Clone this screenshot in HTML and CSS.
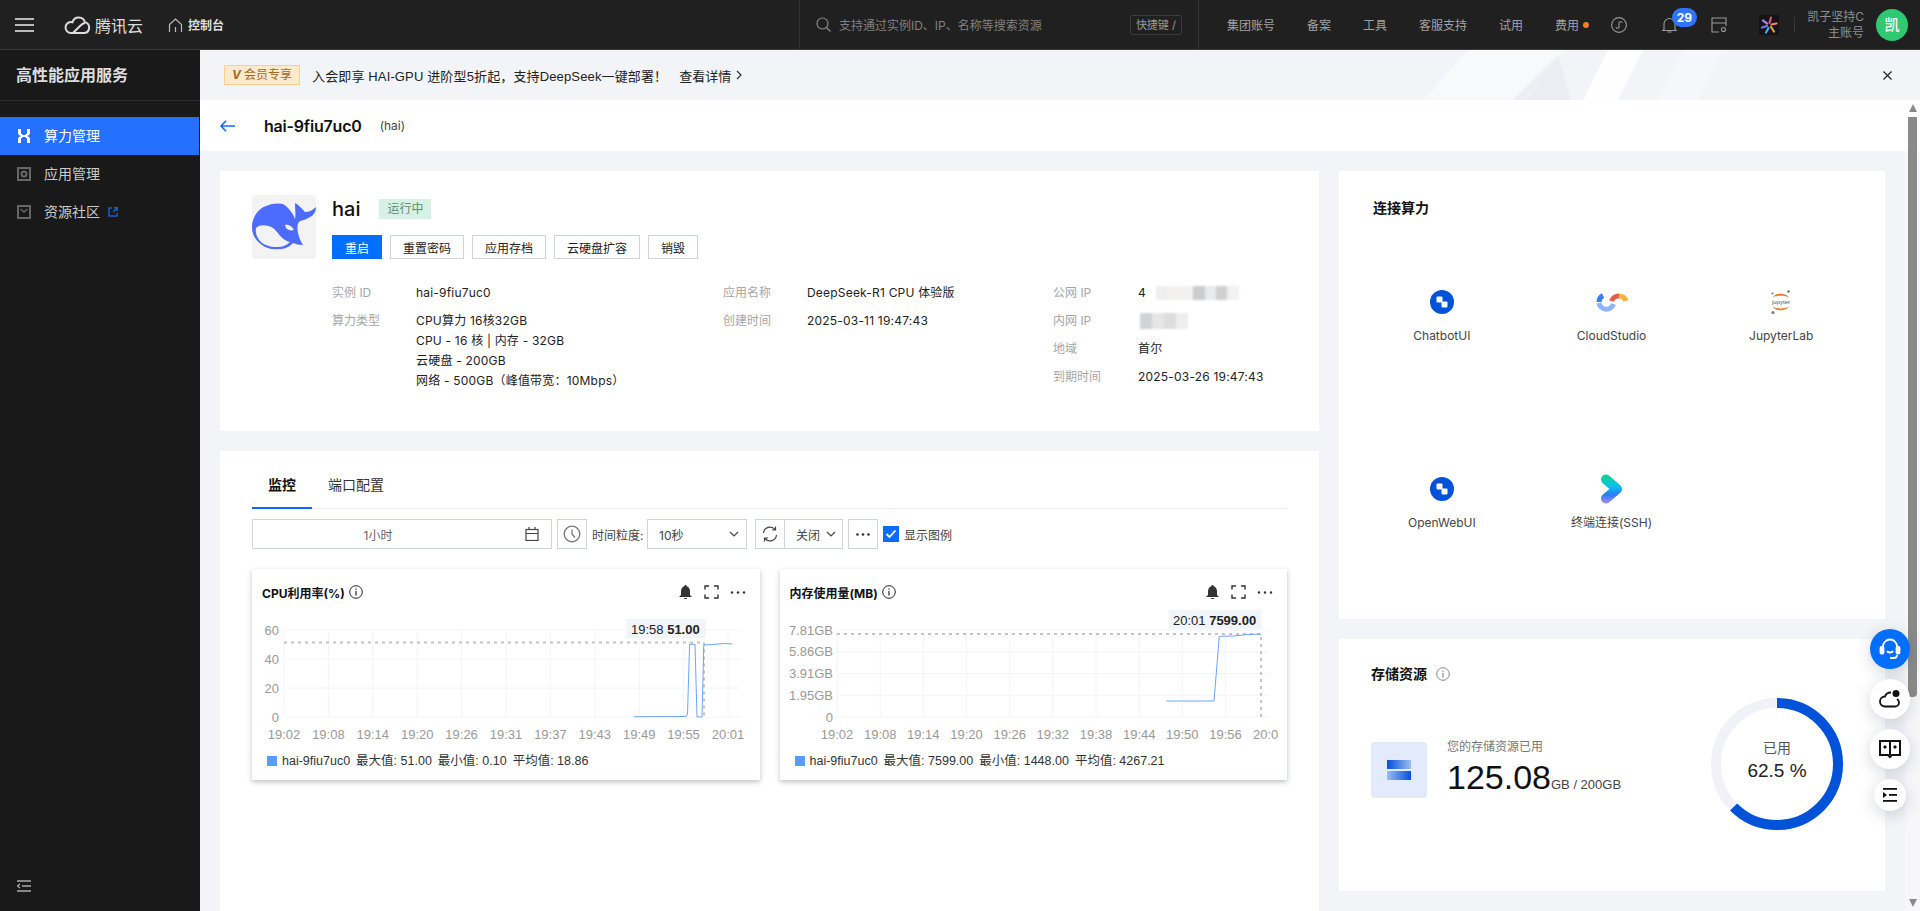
FILE: index.html
```html
<!DOCTYPE html>
<html lang="zh-CN">
<head>
<meta charset="utf-8">
<title>高性能应用服务</title>
<link rel="stylesheet" href="styles.css">
</head>
<body>
<div class="app">
  <header class="topbar">
    <svg class="burger" width="19" height="14" viewBox="0 0 19 14"><path d="M0 1h19M0 7h19M0 13h19" stroke="#bbb" stroke-width="2"/></svg>
    <div class="logo">
      <svg width="27" height="19" viewBox="0 0 27 19" fill="none" stroke="#ddd" stroke-width="2"><path d="M7 18a5.500 5.500 0 1 1 1.500-10.800A6.500 6.500 0 0 1 21 7.400 5.400 5.400 0 0 1 20.500 18Z"/><path d="M9 18l7-7c2-2 4-3 5-3"/></svg>
      <span>腾讯云</span>
    </div>
    <div class="console">
      <svg width="15" height="14" viewBox="0 0 15 14" fill="none" stroke="#bbb" stroke-width="1.200"><path d="M1.500 14V6.500L7.500 1l6 5.500V14M7.500 9v5"/></svg>
      <span>控制台</span>
    </div>
    <div class="search">
      <svg width="15" height="15" viewBox="0 0 15 15" fill="none" stroke="#888" stroke-width="1.200"><circle cx="6.500" cy="6.500" r="5.500"/><path d="M10.500 10.500l4 4"/></svg>
      <span class="search-text">支持通过实例ID、IP、名称等搜索资源</span>
      <span class="shortcut">快捷键 /</span>
    </div>
    <nav class="topnav">
      <a>集团账号</a><a>备案</a><a>工具</a><a>客服支持</a><a>试用</a><a>费用</a>
    </nav>
    <i class="hot-dot"></i>
    <svg class="ico-s" width="16" height="16" viewBox="0 0 16 16" fill="none" stroke="#999" stroke-width="1.100"><circle cx="8" cy="8" r="7.400"/><path d="M4.800 10.300a1.800 1.800 0 0 0 3.200 0V5.700a1.800 1.800 0 0 1 3.200 0"/></svg>
    <div class="bell">
      <svg width="15" height="16" viewBox="0 0 15 16" fill="none" stroke="#999" stroke-width="1.100"><path d="M2 12.500V7a5.500 5.500 0 0 1 11 0v5.500l1.200 1H.8ZM5.500 15h4"/></svg>
      <b class="badge">29</b>
    </div>
    <svg class="ico-c" width="16" height="16" viewBox="0 0 16 16" fill="none" stroke="#999" stroke-width="1.100"><path d="M8 15H1V1h14v8M1 6h14"/><circle cx="12.500" cy="12.500" r="2"/></svg>
    <svg class="ico-k" width="20" height="20" viewBox="0 0 20 20" fill="none" stroke-width="2.200" stroke-linecap="round"><rect width="20" height="20" fill="#141414"/><path d="M10.500 8l1.500-5.500" stroke="#e0508a"/><path d="M12.500 9.500l5-1" stroke="#f08a70"/><path d="M12 12l3 4.500" stroke="#f2a12c"/><path d="M9.500 13l-2.500 4.500" stroke="#4aa4f0"/><path d="M8 11l-5 1.500" stroke="#6a7cf0"/><path d="M8 8.500l-4-3" stroke="#a77cf0"/></svg>
    <i class="t-div"></i>
    <div class="who"><span>凯子坚持C</span><span>主账号</span></div>
    <div class="avatar">凯</div>
  </header>

  <div class="body">
    <aside class="sidebar">
      <h1 class="side-title">高性能应用服务</h1>
      <ul class="menu">
        <li class="menu-item active">
          <svg width="14" height="14" viewBox="0 0 14 14" fill="#fff"><path d="M1 0h3v4.500L6 6h2l2-1.500V0h3v5l-2.500 2L13 9v5h-3V9.500L8 8H6L4 9.500V14H1V9l2.500-2L1 5Z"/></svg>
          <span>算力管理</span>
        </li>
        <li class="menu-item">
          <svg width="14" height="14" viewBox="0 0 14 14" fill="none" stroke="#666"><rect x="1" y="1" width="12" height="12" stroke-width="2"/><circle cx="7" cy="7" r="2.500" stroke-width="2"/></svg>
          <span>应用管理</span>
        </li>
        <li class="menu-item">
          <svg width="14" height="14" viewBox="0 0 14 14" fill="none" stroke="#666" stroke-width="2"><rect x="1" y="1" width="12" height="12"/><path d="M3.500 4l3.500 3 3.500-3" stroke-width="1.500"/></svg>
          <span>资源社区</span>
          <svg class="ext" width="10" height="10" viewBox="0 0 10 10" fill="none" stroke="#1f5fc4" stroke-width="1.500"><path d="M4 1H1v8h8V6M5 5l4-4M6 .8h3.200V4"/></svg>
        </li>
      </ul>
      <svg class="side-foot" width="14" height="12" viewBox="0 0 14 12" fill="none" stroke="#aaa" stroke-width="1.300"><path d="M0 1h14M5 6h9M0 11h14M3 4L.5 6 3 8"/></svg>
    </aside>

    <main class="main">
      <section class="banner">
        <svg class="banner-art" width="400" height="50" viewBox="0 0 400 50"><polygon points="75,0 170,0 135,50 30,50" fill="#fff" opacity=".45"/><polygon points="215,0 250,0 225,50 190,50" fill="#fff" opacity=".9"/><polygon points="290,0 330,0 305,50 265,50" fill="#fff" opacity=".25"/><polygon points="165,5 178,50 120,50 140,30" fill="#e6e8ed" opacity=".55"/></svg>
        <span class="vip"><em>V</em>会员专享</span>
        <span class="banner-text">入会即享 HAI-GPU 进阶型5折起，支持DeepSeek一键部署！</span>
        <a class="banner-link">查看详情</a>
        <svg class="banner-chev" width="6" height="10" viewBox="0 0 6 10" fill="none" stroke="#333" stroke-width="1.200"><path d="M1 1l4 4-4 4"/></svg>
        <svg class="banner-close" width="9" height="9" viewBox="0 0 9 9" stroke="#222" stroke-width="1.200"><path d="M.5.500l8 8M8.500.500l-8 8"/></svg>
      </section>

      <div class="scroll">
        <div class="page-head">
          <svg width="15" height="12" viewBox="0 0 15 12" fill="none" stroke="#0a6cff" stroke-width="1.600"><path d="M15 6H1M6 .8L1 6l5 5.200"/></svg>
          <span class="page-title">hai-9fiu7uc0</span>
          <span class="page-sub">(hai)</span>
        </div>

        <div class="columns">
          <div class="col-left">
            <section class="card app-card">
              <div class="whale">
                <svg width="64" height="64" viewBox="0 0 64 64"><path fill="#4d6bfe" d="M0 32C0 22 6 14 14 11C20 8 27 8 31 9C36 12 41 18 43 24C44 20 43 14 43 8C47 10 50 14 53 17C57 17 61 15 64 12C64 16 62 20 58 22C55 24 52 25 48 26C45 28 45 33 46 38C47 43 49 47 51 50C47 50 44 49 41 48C37 52 33 54 27 54C20 55 14 53 10 50C4 46 0 40 0 32Z"/><path fill="#f3f3f3" d="M4 33C8 29 16 30 21 33C25 36 28 42 33 45C35 46 37 47 38 47C34 51 30 52 25 52C18 52 12 50 8 46C5 42 3 38 4 33Z"/><path fill="#f3f3f3" d="M33 30C36 29 40 31 42 35C39 36 36 35 34 33Z"/></svg>
              </div>
              <div class="app-main">
                <div class="app-head"><span class="app-name">hai</span><span class="tag">运行中</span></div>
                <div class="btns">
                  <button class="btn primary">重启</button>
                  <button class="btn">重置密码</button>
                  <button class="btn">应用存档</button>
                  <button class="btn">云硬盘扩容</button>
                  <button class="btn">销毁</button>
                </div>
                <div class="info">
                  <dl class="info-col c1">
                    <dt>实例 ID</dt><dd>hai-9fiu7uc0</dd>
                    <dt>算力类型</dt><dd>CPU算力 16核32GB<br>CPU - 16 核 | 内存 - 32GB<br>云硬盘 - 200GB<br>网络 - 500GB（峰值带宽：10Mbps）</dd>
                  </dl>
                  <dl class="info-col c2">
                    <dt>应用名称</dt><dd>DeepSeek-R1 CPU 体验版</dd>
                    <dt>创建时间</dt><dd>2025-03-11 19:47:43</dd>
                  </dl>
                  <dl class="info-col c3">
                    <dt>公网 IP</dt><dd class="masked">4<i class="mask mask-a"></i></dd>
                    <dt>内网 IP</dt><dd class="masked"><i class="mask mask-b"></i></dd>
                    <dt>地域</dt><dd>首尔</dd>
                    <dt>到期时间</dt><dd>2025-03-26 19:47:43</dd>
                  </dl>
                </div>
              </div>
            </section>

            <section class="card monitor">
              <div class="tabs"><a class="tab on">监控</a><a class="tab">端口配置</a></div>
              <div class="toolbar">
                <div class="ctl date"><span>1小时</span>
                  <svg width="14" height="14" viewBox="0 0 14 14" fill="none" stroke="#444" stroke-width="1.200"><rect x="1" y="2.500" width="12" height="11"/><path d="M4 0v3M10 0v3M1 6.500h12"/></svg>
                </div>
                <div class="ctl sq clock"><svg width="18" height="18" viewBox="0 0 18 18" fill="none" stroke="#777" stroke-width="1.300"><circle cx="9" cy="9" r="7.800"/><path d="M9 4.500V9l3 3.500"/></svg></div>
                <span class="lbl">时间粒度:</span>
                <div class="ctl select"><span>10秒</span><svg width="10" height="6" viewBox="0 0 10 6" fill="none" stroke="#444" stroke-width="1.200"><path d="M1 1l4 4 4-4"/></svg></div>
                <div class="ctl sq refresh"><svg width="16" height="16" viewBox="0 0 16 16" fill="none" stroke="#444" stroke-width="1.200"><path d="M1.500 7A6.500 6.500 0 0 1 13 3.500M14.500 9A6.500 6.500 0 0 1 3 12.500M13.500.500v3.500H10M2.500 15.500V12H6"/></svg></div>
                <div class="ctl off"><span>关闭</span><svg width="10" height="6" viewBox="0 0 10 6" fill="none" stroke="#444" stroke-width="1.200"><path d="M1 1l4 4 4-4"/></svg></div>
                <div class="ctl sq more"><svg width="14" height="3" viewBox="0 0 14 3" fill="#333"><circle cx="1.500" cy="1.500" r="1.300"/><circle cx="7" cy="1.500" r="1.300"/><circle cx="12.500" cy="1.500" r="1.300"/></svg></div>
                <span class="check"><svg width="16" height="16" viewBox="0 0 16 16"><rect width="16" height="16" fill="#0a6cff"/><path d="M3.500 8l3 3 6-6.500" fill="none" stroke="#fff" stroke-width="1.800"/></svg></span>
                <span class="check-lbl">显示图例</span>
              </div>

              <div class="charts">
                <article class="chart">
                  <div class="chart-head">
                    <span class="chart-title">CPU利用率(%)</span>
                    <svg class="info-i" width="14" height="14" viewBox="0 0 14 14" fill="none" stroke="#222"><circle cx="7" cy="7" r="6.300"/><path d="M7 6v4.500M7 3.500v1.300" stroke-width="1.200"/></svg>
                    <span class="grow"></span>
                    <svg class="h-bell" width="13" height="14" viewBox="0 0 13 14" fill="#333"><path d="M6.500 0C7.300 0 7.700.600 7.700 1.300 10 2 11 4 11 6.500V10l2 2H0l2-2V6.500C2 4 3 2 5.300 1.300 5.300.600 5.700 0 6.500 0ZM4.800 13h3.400c0 .6-.8 1-1.700 1s-1.700-.4-1.700-1Z"/></svg>
                    <svg class="h-full" width="15" height="14" viewBox="0 0 15 14" fill="none" stroke="#333" stroke-width="1.400"><path d="M5 1H1v3.500M10 1h4v3.500M5 13H1V9.500M10 13h4V9.500"/></svg>
                    <svg class="h-more" width="16" height="3" viewBox="0 0 16 3" fill="#333"><circle cx="2" cy="1.500" r="1.200"/><circle cx="8" cy="1.500" r="1.200"/><circle cx="14" cy="1.500" r="1.200"/></svg>
                  </div>
                  <svg class="plot" width="508" height="135" viewBox="252 610 508 135">
                    <path class="grid" d="M284 630H741M284 659H741M284 688H741M284 717H741M284 630V717M328.400 630V717M372.800 630V717M417.200 630V717M461.600 630V717M506 630V717M550.400 630V717M594.800 630V717M639.200 630V717M683.600 630V717M728 630V717"/>
                    <g class="ylab"><text x="279" y="635">60</text><text x="279" y="664">40</text><text x="279" y="693">20</text><text x="279" y="722">0</text></g>
                    <g class="xlab"><text x="284" y="739">19:02</text><text x="328.400" y="739">19:08</text><text x="372.800" y="739">19:14</text><text x="417.200" y="739">19:20</text><text x="461.600" y="739">19:26</text><text x="506" y="739">19:31</text><text x="550.400" y="739">19:37</text><text x="594.800" y="739">19:43</text><text x="639.200" y="739">19:49</text><text x="683.600" y="739">19:55</text><text x="728" y="739">20:01</text></g>
                    <path class="dash" d="M284 642.500H704V717"/>
                    <polyline class="line" points="634,716.700 686,716.500 687.500,714 689.600,644.300 695,644.300 697,717 702,717 703.800,645 712,644.500 725,643.500 732.400,644"/>
                    <rect class="tip" x="626.500" y="619" width="79" height="19"/>
                    <text class="tip-t" x="631" y="634">19:58 <tspan font-weight="700">51.00</tspan></text>
                  </svg>
                  <div class="legend"><i></i><span>hai-9fiu7uc0</span><span>最大值: 51.00</span><span>最小值: 0.10</span><span>平均值: 18.86</span></div>
                </article>

                <article class="chart">
                  <div class="chart-head">
                    <span class="chart-title">内存使用量(MB)</span>
                    <svg class="info-i" width="14" height="14" viewBox="0 0 14 14" fill="none" stroke="#222"><circle cx="7" cy="7" r="6.300"/><path d="M7 6v4.500M7 3.500v1.300" stroke-width="1.200"/></svg>
                    <span class="grow"></span>
                    <svg class="h-bell" width="13" height="14" viewBox="0 0 13 14" fill="#333"><path d="M6.500 0C7.300 0 7.700.600 7.700 1.300 10 2 11 4 11 6.500V10l2 2H0l2-2V6.500C2 4 3 2 5.300 1.300 5.300.600 5.700 0 6.500 0ZM4.800 13h3.400c0 .6-.8 1-1.700 1s-1.700-.4-1.700-1Z"/></svg>
                    <svg class="h-full" width="15" height="14" viewBox="0 0 15 14" fill="none" stroke="#333" stroke-width="1.400"><path d="M5 1H1v3.500M10 1h4v3.500M5 13H1V9.500M10 13h4V9.500"/></svg>
                    <svg class="h-more" width="16" height="3" viewBox="0 0 16 3" fill="#333"><circle cx="2" cy="1.500" r="1.200"/><circle cx="8" cy="1.500" r="1.200"/><circle cx="14" cy="1.500" r="1.200"/></svg>
                  </div>
                  <svg class="plot" width="508" height="135" viewBox="780 610 508 135">
                    <path class="grid" d="M837 630H1269M837 651.800H1269M837 673.500H1269M837 695.200H1269M837 717H1269M837 630V717M880.200 630V717M923.300 630V717M966.500 630V717M1009.700 630V717M1052.800 630V717M1096 630V717M1139.200 630V717M1182.300 630V717M1225.500 630V717"/>
                    <g class="ylab"><text x="833" y="635">7.81GB</text><text x="833" y="656">5.86GB</text><text x="833" y="678">3.91GB</text><text x="833" y="700">1.95GB</text><text x="833" y="722">0</text></g>
                    <g class="xlab"><text x="837" y="739">19:02</text><text x="880.200" y="739">19:08</text><text x="923.300" y="739">19:14</text><text x="966.500" y="739">19:20</text><text x="1009.700" y="739">19:26</text><text x="1052.800" y="739">19:32</text><text x="1096" y="739">19:38</text><text x="1139.200" y="739">19:44</text><text x="1182.300" y="739">19:50</text><text x="1225.500" y="739">19:56</text></g>
                    <text class="xlab-end" x="1253" y="739">20:0</text>
                    <path class="dash" d="M837 634H1261V717"/>
                    <polyline class="line" points="1166.500,701 1214,701 1219.300,636.300 1233.800,636 1246,634.700 1259.700,634 1261,635"/>
                    <rect class="tip" x="1168.500" y="610" width="93" height="19"/>
                    <text class="tip-t" x="1173" y="625">20:01 <tspan font-weight="700">7599.00</tspan></text>
                  </svg>
                  <div class="legend"><i></i><span>hai-9fiu7uc0</span><span>最大值: 7599.00</span><span>最小值: 1448.00</span><span>平均值: 4267.21</span></div>
                </article>
              </div>
            </section>
          </div>

          <div class="col-right">
            <section class="card connect">
              <h2 class="card-title">连接算力</h2>
              <div class="tiles">
                <div class="tile">
                  <svg width="24" height="24" viewBox="0 0 24 24"><circle cx="12" cy="12" r="12" fill="#0052d9"/><rect x="6.500" y="6.500" width="6" height="6" rx="1" fill="#fff"/><rect x="11.500" y="11.500" width="6" height="6" rx="1" fill="#fff"/></svg>
                  <span>ChatbotUI</span>
                </div>
                <div class="tile">
                  <svg width="32" height="24" viewBox="0 0 32 24" fill="none" stroke-width="5"><path d="M7 5.500A7.500 7.500 0 0 0 3 12" stroke="#3f7bf2"/><path d="M3 13a7.500 7.500 0 0 0 14.500 1" stroke="#8fb4fb"/><path d="M15.500 11A7.500 7.500 0 0 1 23 6" stroke="#ec5a45"/><path d="M23 6a7.500 7.500 0 0 1 7 5" stroke="#f3b33c"/></svg>
                  <span>CloudStudio</span>
                </div>
                <div class="tile">
                  <svg width="24" height="24" viewBox="0 0 24 24" fill="none"><path d="M3.500 7.500C6 2.500 17 2.500 20 7.500C17 5 6 5 3.500 7.500Z" fill="#f37726"/><path d="M3.500 16.500C6 21.500 17 21.500 20 16.500C17 19 6 19 3.500 16.500Z" fill="#f37726"/><text class="jup" x="12" y="13.500">jupyter</text><circle cx="19.500" cy="1.500" r="1.300" fill="#767677"/><circle cx="3.500" cy="3.500" r="1" fill="#767677"/><circle cx="4" cy="22.500" r="1.500" fill="#767677"/></svg>
                  <span>JupyterLab</span>
                </div>
                <div class="tile">
                  <svg width="24" height="24" viewBox="0 0 24 24"><circle cx="12" cy="12" r="12" fill="#0052d9"/><rect x="6.500" y="6.500" width="6" height="6" rx="1" fill="#fff"/><rect x="11.500" y="11.500" width="6" height="6" rx="1" fill="#fff"/></svg>
                  <span>OpenWebUI</span>
                </div>
                <div class="tile">
                  <svg class="ssh" width="24" height="30" viewBox="0 0 24 30" fill="none"><defs><linearGradient id="sshg" gradientUnits="userSpaceOnUse" x1="0" y1="0" x2="0" y2="30"><stop offset="0" stop-color="#12d67d"/><stop offset=".4" stop-color="#0cc0ee"/><stop offset=".7" stop-color="#2a7cf7"/><stop offset="1" stop-color="#bb8cf5"/></linearGradient></defs><path d="M6 5.500L17 15 6 24.500" stroke="url(#sshg)" stroke-width="10" stroke-linecap="round" stroke-linejoin="round"/></svg>
                  <span>终端连接(SSH)</span>
                </div>
              </div>
            </section>

            <section class="card storage">
              <div class="st-head">
                <h2 class="card-title">存储资源</h2>
                <svg width="14" height="14" viewBox="0 0 14 14" fill="none" stroke="#888"><circle cx="7" cy="7" r="6.300"/><path d="M7 6v4.500M7 3.500v1.300" stroke-width="1.200"/></svg>
              </div>
              <div class="st-body">
                <div class="st-icon"><i class="bar a"></i><i class="bar b"></i></div>
                <div class="st-text">
                  <div class="st-cap">您的存储资源已用</div>
                  <div class="st-num"><strong>125.08</strong><span>GB / 200GB</span></div>
                </div>
                <div class="donut">
                  <svg width="132" height="132" viewBox="0 0 132 132" fill="none" stroke-width="10"><circle cx="66" cy="66" r="61" stroke="#f0f2f7"/><circle cx="66" cy="66" r="61" stroke="#0052d9" stroke-dasharray="239.500 383.300" transform="rotate(-90 66 66)"/></svg>
                  <div class="donut-t"><span>已用</span><b>62.5 %</b></div>
                </div>
              </div>
            </section>
          </div>
        </div>

        <div class="sbar">
          <i class="arr up"></i>
          <i class="thumb"></i>
          <i class="arr down"></i>
        </div>
      </div>
    </main>
  </div>

  <div class="fab">
    <a class="fab-b blue"><svg width="22" height="22" viewBox="0 0 22 22" fill="none" stroke="#fff" stroke-width="1.800"><path d="M4 10V8.500a7 7 0 0 1 14 0V10"/><rect x="1.500" y="9" width="3" height="6.500" rx="1" fill="#fff"/><rect x="17.500" y="9" width="3" height="6.500" rx="1" fill="#fff"/><path d="M8 13c1 2 5 2 6 0M11 20h4c2 0 3-1 3-3"/></svg></a>
    <a class="fab-b"><svg width="22" height="20" viewBox="0 0 22 20" fill="none" stroke="#111" stroke-width="1.800"><path d="M12 3.500A6 6 0 0 0 6 7.500a5 5 0 0 0 0 10h10a4 4 0 0 0 4-4 4 4 0 0 0-2-3.500"/><circle cx="17" cy="4.500" r="3.500" fill="#111" stroke="none"/></svg></a>
    <a class="fab-b"><svg width="22" height="20" viewBox="0 0 22 20" fill="none" stroke="#111" stroke-width="2"><path d="M1 2h20v14H13l-2 2-2-2H1ZM11 2v14"/><path d="M5 7h2v2H5ZM15 7h2v2h-2Z" fill="#111" stroke-width="1"/></svg></a>
    <a class="fab-b small"><svg width="14" height="14" viewBox="0 0 14 14" fill="#111"><rect width="14" height="1.800"/><rect x="6" y="6" width="8" height="1.800"/><rect y="12" width="14" height="1.800"/><path d="M0 4l4 3-4 3Z"/></svg></a>
  </div>
</div>
</body>
</html>
```

FILE: styles.css
```css
* { box-sizing: border-box; }
html, body { margin: 0; height: 100%; overflow: hidden; }
body { font-family: Inter, "Noto Sans CJK SC", sans-serif; font-size: 12px; color: #222; background: #f2f4f8; }
ul, dl, dd, h1, h2 { margin: 0; padding: 0; }
i { font-style: normal; }
svg { display: block; flex: none; }

.app { position: relative; height: 100vh; display: flex; flex-direction: column; }

/* top bar */
.topbar { height: 50px; flex: none; display: flex; align-items: center; background: #202020; border-bottom: 1px solid #3a3a3a; color: #a3a3a3; }
.burger { margin-left: 15px; }
.logo { display: flex; align-items: center; gap: 4px; margin-left: 30px; color: #ddd; font-size: 16px; }
.console { display: flex; align-items: center; gap: 5px; margin-left: 25px; color: #ddd; font-weight: 700; }
.search { margin-left: auto; width: 400px; height: 49px; display: flex; align-items: center; padding: 0 16px; border-left: 1px solid #333; border-right: 1px solid #333; color: #808080; }
.search-text { margin-left: 8px; flex: 1; }
.shortcut { width: 52px; height: 20px; line-height: 18px; text-align: center; border: 1px solid #3a3a3a; border-radius: 2px; font-size: 11px; color: #999; }
.topnav { display: flex; gap: 32px; margin-left: 28px; }
.hot-dot { width: 6px; height: 6px; margin-left: 4px; border-radius: 50%; background: #f07f2e; }
.ico-s { margin-left: 22px; }
.bell { position: relative; margin-left: 35px; width: 15px; }
.badge { position: absolute; left: 10px; top: -9px; width: 25px; height: 19px; line-height: 19px; text-align: center; border-radius: 10px; background: #2d74ff; color: #fff; font-size: 12px; }
.ico-c { margin-left: 34px; }
.ico-k { margin-left: 32px; }
.t-div { width: 1px; height: 16px; margin-left: 15px; background: #3a3a3a; }
.who { margin-left: 11px; width: 58px; display: flex; flex-direction: column; align-items: flex-end; line-height: 16px; color: #8f8f8f; }
.avatar { width: 32px; height: 32px; margin: 0 12px; border-radius: 50%; background: #2ec971; color: #fff; font-size: 15px; line-height: 32px; text-align: center; font-weight: 500; }

/* frame */
.body { flex: 1; min-height: 0; display: flex; }
.sidebar { width: 200px; flex: none; display: flex; flex-direction: column; background: #191919; }
.side-title { height: 51px; line-height: 50px; padding-left: 16px; font-size: 16px; font-weight: 700; color: #ddd; border-bottom: 1px solid #2e2e2e; }
.menu { list-style: none; padding-top: 16px; }
.menu-item { height: 38px; display: flex; align-items: center; gap: 13px; padding-left: 17px; font-size: 14px; color: #ccc; }
.menu-item span { margin-top: -2px; }
.menu-item.active { background: #2470ff; color: #fff; margin-right: 1px; }
.menu-item .ext { margin-left: -5px; }
.side-foot { margin: auto 0 19px 17px; }

.main { flex: 1; min-width: 0; display: flex; flex-direction: column; }
.banner { position: relative; height: 50px; flex: none; display: flex; align-items: center; padding-left: 24px; background: #f2f4f8; font-size: 13px; }
.banner-art { position: absolute; left: 1193px; top: 0; }
.vip { position: relative; width: 76px; height: 20px; line-height: 18px; text-align: center; background: #fdeacb; border: 1px solid #fbcf8e; color: #a5682c; font-size: 12px; }
.vip em { margin-right: 3px; font-weight: 700; color: #a5682c; }
.banner-text { position: relative; margin-left: 12px; color: #222; font-family: "Liberation Sans", "Noto Sans CJK SC", sans-serif; letter-spacing: .14px; }
.banner-link { position: relative; margin-left: 12px; color: #222; }
.banner-chev { position: relative; margin-left: 5px; }
.banner-close { position: absolute; right: 28px; top: 21px; }

.scroll { position: relative; flex: 1; min-height: 0; overflow: hidden; }
.page-head { height: 51px; display: flex; align-items: center; padding-left: 20px; background: #fff; }
.page-title { margin-left: 29px; font-size: 16px; font-weight: 600; color: #111; letter-spacing: -.2px; }
.page-sub { margin-left: 18px; color: #444; }

.columns { display: flex; gap: 20px; padding: 20px 0 0 20px; }
.col-left { width: 1099px; flex: none; display: flex; flex-direction: column; gap: 20px; }
.col-right { width: 546px; flex: none; display: flex; flex-direction: column; gap: 20px; }
.card { background: #fff; }

/* app card */
.app-card { height: 260px; display: flex; padding: 24px 32px; }
.whale { width: 64px; height: 64px; flex: none; border-radius: 4px; background: #f3f3f3; }
.app-main { margin-left: 16px; flex: 1; }
.app-head { height: 28px; display: flex; align-items: center; gap: 19px; }
.app-name { font-size: 20px; font-weight: 500; color: #111; }
.tag { width: 52px; height: 20px; line-height: 20px; text-align: center; background: #d5f2e4; color: #5f8a75; }
.btns { display: flex; gap: 8px; margin-top: 12px; }
.btn { height: 24px; padding: 0 12px; border: 1px solid #cfd5de; background: #fff; font: inherit; color: #222; }
.btn.primary { background: #006eff; border-color: #006eff; color: #fff; }
.info { display: flex; margin-top: 24px; }
.info-col { display: grid; align-content: start; row-gap: 8px; line-height: 20px; }
.info-col dt { color: #a6a6a6; }
.info-col dd { color: #222; letter-spacing: .2px; }
.c1 { width: 391px; grid-template-columns: 84px 1fr; }
.c2 { width: 330px; grid-template-columns: 84px 1fr; }
.c3 { flex: 1; grid-template-columns: 85px 1fr; }
.masked { display: flex; align-items: center; height: 20px; }
.mask { display: block; filter: blur(1px); }
.mask-a { width: 92px; height: 14px; margin-left: 1px; background: linear-gradient(90deg, #fff 0 10%, #eee 10% 22%, #f3f1ee 22% 50%, #ccc 50% 63%, #e8eaee 63% 75%, #d0d0d0 75% 87%, #f0f1f3 87%); }
.mask-b { width: 48px; height: 16px; margin-left: 2px; background: linear-gradient(90deg, #d0d2d5 0 25%, #e6e6e6 25% 50%, #ddd 50% 75%, #eee 75%); }

/* monitor */
.monitor { padding: 0 32px; min-height: 480px; }
.tabs { height: 58px; display: flex; border-bottom: 1px solid #e7eaef; }
.tab { height: 58px; padding: 24px 16px 0; line-height: 20px; font-size: 14px; color: #333; border-bottom: 2px solid transparent; }
.tab.on { font-weight: 700; color: #111; border-bottom-color: #0a6cff; width: 60px; }
.toolbar { display: flex; align-items: center; height: 30px; margin-top: 10px; }
.ctl { height: 30px; display: flex; align-items: center; border: 1px solid #cfd5de; background: #fff; color: #444; }
.date { width: 300px; padding: 0 12px 0 0; }
.date span { flex: 1; text-align: center; padding-right: 22px; color: #666; }
.sq { width: 30px; justify-content: center; }
.clock { margin-left: 5px; }
.lbl { margin-left: 5px; width: 55px; color: #444; }
.select { width: 100px; padding: 0 7px 0 11px; justify-content: space-between; }
.refresh { margin-left: 8px; }
.off { width: 59px; margin-left: -1px; padding: 0 6px 0 11px; justify-content: space-between; }
.more { margin-left: 5px; }
.check { margin-left: 5px; }
.check-lbl { margin-left: 5px; color: #444; }

.charts { display: grid; grid-template-columns: 1fr 1fr; gap: 20px; margin-top: 20px; }
.chart { height: 211px; background: #fff; box-shadow: 0 2px 5px rgba(54, 58, 80, .32); overflow: hidden; }
.chart-head { height: 41px; display: flex; align-items: center; padding: 5px 14px 0 10px; }
.chart-title { font-weight: 700; color: #111; }
.info-i { margin-left: 4px; }
.grow { flex: 1; }
.h-full { margin-left: 12px; }
.h-more { margin-left: 11px; }
.plot text { font-family: "Liberation Sans", sans-serif; font-size: 13px; }
.grid { fill: none; stroke: #f3f4f6; stroke-width: 1; }
.ylab text { fill: #999; text-anchor: end; }
.xlab text { fill: #999; text-anchor: middle; }
.plot .xlab-end { fill: #999; }
.dash { fill: none; stroke: #c4c4c4; stroke-width: 2; stroke-dasharray: 3 4; }
.line { fill: none; stroke: #6ba6fa; stroke-width: 1; }
.tip { fill: #f1f4f8; }
.tip-t { fill: #222; }
.legend { display: flex; align-items: center; gap: 6px; padding: 6px 0 0 15px; line-height: 20px; color: #333; font-family: "Liberation Sans", "Noto Sans CJK SC", sans-serif; font-size: 12.5px; }
.legend i { width: 10px; height: 10px; margin-right: -1px; background: #5b9cf8; }

/* connect */
.card-title { font-size: 14px; line-height: 20px; font-weight: 700; color: #111; }
.connect { height: 448px; padding: 27px 19px 0 34px; }
.tiles { display: grid; grid-template-columns: repeat(3, 169.7px); grid-auto-rows: 187px; margin: 32px 0 0 -16px; }
.tile { display: flex; flex-direction: column; align-items: center; padding-top: 40px; gap: 12px; line-height: 20px; color: #444; }
.tile .ssh { margin: -3px 0; }
.jup { font-family: "Liberation Sans", sans-serif; font-size: 6px; fill: #555; text-anchor: middle; }

/* storage */
.storage { height: 252px; padding: 25px 42px 0 32px; }
.st-head { display: flex; align-items: center; gap: 9px; }
.st-body { display: flex; margin-top: 14px; }
.st-icon { width: 56px; height: 56px; margin-top: 44px; padding: 18px 16px 0; border-radius: 4px; background: #e2eafb; display: flex; flex-direction: column; gap: 2px; }
.bar { display: block; height: 9px; }
.bar.a { background: linear-gradient(90deg, #0052d9, #9dbcf0); }
.bar.b { background: linear-gradient(90deg, #9dbcf0, #0052d9); }
.st-text { margin: 39px 0 0 20px; flex: 1; }
.st-cap { line-height: 20px; color: #777; }
.st-num { display: flex; align-items: baseline; line-height: 40px; font-family: "Liberation Sans", "Noto Sans CJK SC", sans-serif; }
.st-num strong { font-size: 34px; font-weight: 400; color: #111; }
.st-num span { font-size: 13px; color: #444; }
.donut { position: relative; width: 132px; height: 132px; flex: none; }
.donut-t { position: absolute; inset: 0; display: flex; flex-direction: column; align-items: center; justify-content: center; padding-bottom: 8px; }
.donut-t span { font-size: 14px; line-height: 22px; color: #555; }
.donut-t b { font-family: "Liberation Sans", sans-serif; font-size: 19px; line-height: 24px; font-weight: 400; color: #222; }

/* scrollbar */
.sbar { position: absolute; right: 0; top: 0; bottom: 0; width: 15px; display: flex; flex-direction: column; align-items: center; padding: 4px 0; background: linear-gradient(#fff 0 51px, #f7f7f9 51px); }
.arr { width: 0; height: 0; border-left: 4px solid transparent; border-right: 4px solid transparent; }
.arr.up { border-bottom: 8px solid #8a8a8a; }
.arr.down { margin-top: auto; border-top: 8px solid #8a8a8a; }
.thumb { display: block; width: 9px; height: 580px; margin-top: 5px; border-radius: 0 0 4px 4px; background: #8a8a8a; }

/* floating */
.fab { position: absolute; left: 1870px; top: 629px; width: 40px; display: flex; flex-direction: column; align-items: center; gap: 10px; }
.fab-b { width: 40px; height: 40px; display: flex; align-items: center; justify-content: center; border-radius: 50%; background: #fff; box-shadow: 0 4px 16px rgba(40, 50, 80, .2); }
.fab-b.blue { background: #006eff; }
.fab-b.small { width: 32px; height: 32px; }
```
